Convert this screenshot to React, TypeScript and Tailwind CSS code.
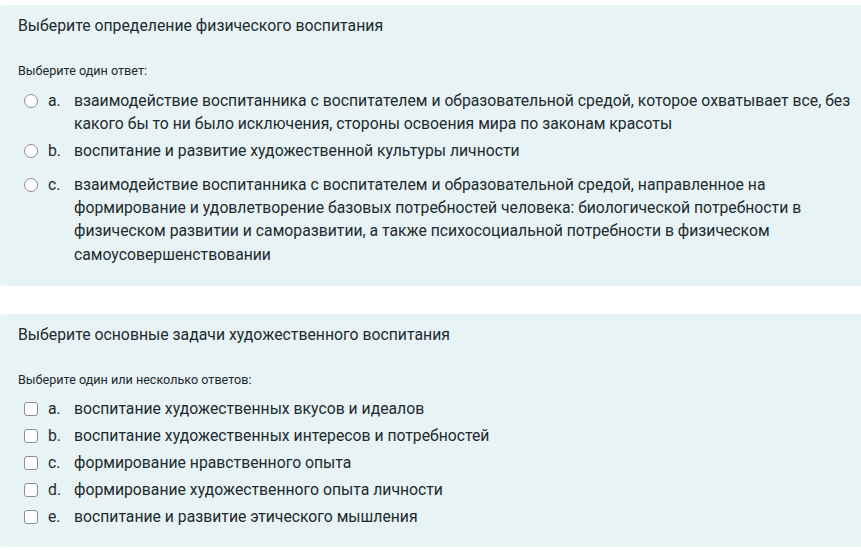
import React from "react";

const font = { fontFamily: "Roboto, 'Noto Sans', Arial, sans-serif" };

function Radio() {
  return (
    <span className="mt-[5px] h-[14px] w-[14px] shrink-0 rounded-full border border-[#8a8f94] bg-white" />
  );
}

function Check() {
  return (
    <span className="mt-[5px] h-[14px] w-[14px] shrink-0 rounded-[3px] border border-[#8a8f94] bg-white" />
  );
}

function Option({
  kind,
  letter,
  text,
  className = "",
}: {
  kind: "radio" | "check";
  letter: string;
  text: string;
  className?: string;
}) {
  return (
    <div className={"flex items-start pl-[24px] " + className}>
      {kind === "radio" ? <Radio /> : <Check />}
      <span className="ml-[10px] w-[26px] shrink-0">{letter}</span>
      <span className="max-w-[785px]">{text}</span>
    </div>
  );
}

export default function App() {
  return (
    <div
      className="h-[550px] w-[861px] overflow-hidden bg-white pt-[5px] text-[15.75px] leading-[23.3px] text-[#1d2a2e]"
      style={font}
    >
      <div className="mr-[-20px] rounded-[4px] bg-[#e7f3f5] pb-[20px] pl-[18px] pt-[9px]">
        <div className="text-[15.8px] leading-[24px]">Выберите определение физического воспитания</div>
        <div className="mt-[25px] text-[12.6px] leading-[16px]">Выберите один ответ:</div>
        <div className="ml-[-18px]">
          <Option
            kind="radio"
            letter="a."
            className="mt-[10px]"
            text="взаимодействие воспитанника с воспитателем и образовательной средой, которое охватывает все, без какого бы то ни было исключения, стороны освоения мира по законам красоты"
          />
          <Option
            kind="radio"
            letter="b."
            className="mt-[3px]"
            text="воспитание и развитие художественной культуры личности"
          />
          <Option
            kind="radio"
            letter="c."
            className="mt-[11px]"
            text="взаимодействие воспитанника с воспитателем и образовательной средой, направленное на формирование и удовлетворение базовых потребностей человека: биологической потребности в физическом развитии и саморазвитии, а также психосоциальной потребности в физическом самоусовершенствовании"
          />
        </div>
      </div>

      <div className="mr-[-20px] mt-[28px] rounded-[4px] bg-[#e7f3f5] pb-[19px] pl-[18px] pt-[9px]">
        <div className="text-[15.8px] leading-[24px]">Выберите основные задачи художественного воспитания</div>
        <div className="mt-[25px] text-[12.6px] leading-[16px]">Выберите один или несколько ответов:</div>
        <div className="ml-[-18px] mt-[9px] flex flex-col gap-[3.7px]">
          <Option kind="check" letter="a." text="воспитание художественных вкусов и идеалов" />
          <Option kind="check" letter="b." text="воспитание художественных интересов и потребностей" />
          <Option kind="check" letter="c." text="формирование нравственного опыта" />
          <Option kind="check" letter="d." text="формирование художественного опыта личности" />
          <Option kind="check" letter="e." text="воспитание и развитие этического мышления" />
        </div>
      </div>
    </div>
  );
}
